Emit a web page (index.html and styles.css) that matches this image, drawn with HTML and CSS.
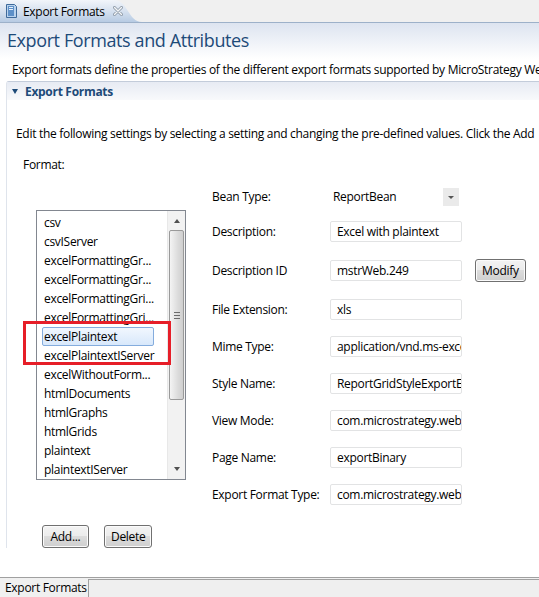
FILE: index.html
```html
<!DOCTYPE html>
<html lang="en">
<head>
    <meta charset="UTF-8">
    <title>Export Formats</title>
    <link rel="stylesheet" href="styles.css">
</head>
<body>
    <div class="tabbar">
        <div class="tab">
            <svg class="tab-icon" width="14" height="16" viewBox="0 0 14 16">
                <path d="M2.5 1.5 H10.5 L12.5 3.5 V14.5 H2.5 Z" fill="#b9d3ee" stroke="#3f6a9a"/>
                <path d="M4 3 H10 V13 H4 Z" fill="#5d90c8"/>
                <path d="M5 4.5 H9 M5 6.5 H9" stroke="#e8f1fb"/>
            </svg>
            <span class="tab-title">Export Formats</span>
            <svg class="tab-close" width="10" height="10" viewBox="0 0 10 10">
                <path d="M1.5 1.5 L8.5 8.5 M8.5 1.5 L1.5 8.5" stroke="#8c98a6" stroke-width="3" stroke-linecap="round"/>
                <path d="M1.5 1.5 L8.5 8.5 M8.5 1.5 L1.5 8.5" stroke="#f4f6f8" stroke-width="1.4" stroke-linecap="round"/>
            </svg>
        </div>
    </div>

    <div class="page">
        <div class="header">
            <h1>Export Formats and Attributes</h1>
        </div>
        <p class="intro">Export formats define the properties of the different export formats supported by MicroStrategy Web</p>

        <div class="section">
            <div class="section-head">
                <span class="twisty"></span>
                <span>Export Formats</span>
            </div>
            <p class="hint">Edit the following settings by selecting a setting and changing the pre-defined values. Click the Add</p>
            <p class="format-label">Format:</p>

            <div class="editor">
                <div class="left-col">
                    <div class="listbox">
                        <ul class="items">
                            <li>csv</li>
                            <li>csvIServer</li>
                            <li>excelFormattingGr...</li>
                            <li>excelFormattingGr...</li>
                            <li>excelFormattingGri...</li>
                            <li>excelFormattingGri...</li>
                            <li class="selected">excelPlaintext</li>
                            <li>excelPlaintextIServer</li>
                            <li>excelWithoutForm...</li>
                            <li>htmlDocuments</li>
                            <li>htmlGraphs</li>
                            <li>htmlGrids</li>
                            <li>plaintext</li>
                            <li>plaintextIServer</li>
                        </ul>
                        <div class="scrollbar">
                            <span class="arrow up"></span>
                            <div class="thumb"><span class="grip"></span></div>
                            <span class="arrow down"></span>
                        </div>
                        <div class="highlight"></div>
                    </div>
                    <div class="list-actions">
                        <button class="btn">Add...</button>
                        <button class="btn">Delete</button>
                    </div>
                </div>

                <div class="form">
                    <div class="row first">
                        <label>Bean Type:</label>
                        <div class="combo">
                            <span>ReportBean</span>
                            <span class="combo-btn"></span>
                        </div>
                    </div>
                    <div class="row gap14">
                        <label>Description:</label>
                        <div class="field">Excel with plaintext</div>
                    </div>
                    <div class="row gap18">
                        <label>Description ID</label>
                        <div class="field">mstrWeb.249</div>
                        <button class="btn modify">Modify</button>
                    </div>
                    <div class="row gap18">
                        <label>File Extension:</label>
                        <div class="field">xls</div>
                    </div>
                    <div class="row">
                        <label>Mime Type:</label>
                        <div class="field">application/vnd.ms-excel</div>
                    </div>
                    <div class="row">
                        <label>Style Name:</label>
                        <div class="field">ReportGridStyleExportExcel</div>
                    </div>
                    <div class="row">
                        <label>View Mode:</label>
                        <div class="field">com.microstrategy.web.objects</div>
                    </div>
                    <div class="row">
                        <label>Page Name:</label>
                        <div class="field">exportBinary</div>
                    </div>
                    <div class="row">
                        <label>Export Format Type:</label>
                        <div class="field">com.microstrategy.web.app</div>
                    </div>
                </div>
            </div>
        </div>
    </div>

    <div class="statusbar">
        <span class="status-label">Export Formats</span>
        <div class="status-box"></div>
    </div>
</body>
</html>
```

FILE: styles.css
```css
body {
    margin: 0;
    width: 539px;
    height: 597px;
    overflow: hidden;
    display: flex;
    flex-direction: column;
    font-family: "Open Sans", "Noto Sans", sans-serif;
    font-size: 12px;
    letter-spacing: -0.3px;
    color: #000;
    background: #fff;
}

/* editor tab strip */
.tabbar {
    height: 22px;
    background: #f0f0f0;
    border-bottom: 1px solid #9db1c9;
    flex-shrink: 0;
}
.tab {
    width: 142px;
    height: 22px;
    display: flex;
    align-items: center;
    background: linear-gradient(#f2f5fa, #d6e1ef 50%, #b7cbe3);
    clip-path: path('M0 0 H114 C128 0 128 22 142 22 H0 Z');
}
.tab-icon {
    margin: 0 5px 0 4px;
}
.tab-close {
    margin-left: 8px;
}

.page {
    flex: 1;
}
.header {
    height: 36px;
    background: linear-gradient(#dde4f0, #fff);
    padding-left: 7px;
}
h1 {
    margin: 0;
    padding-top: 5px;
    font-size: 18px;
    font-weight: normal;
    letter-spacing: -0.4px;
    color: #1d4a78;
    line-height: 24px;
}
.intro {
    margin: 2px 0 0 12px;
    line-height: 18px;
    white-space: nowrap;
}

/* collapsible section */
.section {
    margin: 2px 0 0 6px;
    border-top: 1px solid #c3ccda;
    border-left: 1px solid #dfe4ec;
    border-top-left-radius: 3px;
}
.section-head {
    height: 18px;
    display: flex;
    align-items: center;
    background: linear-gradient(#e7ebf3, #fff 140%);
    color: #1d4a78;
    font-weight: bold;
}
.twisty {
    width: 0;
    height: 0;
    margin: 0 7px 0 5px;
    border-left: 3.5px solid transparent;
    border-right: 3.5px solid transparent;
    border-top: 5px solid #1d4a78;
}
.hint {
    margin: 25px 0 0 9px;
    line-height: 18px;
    white-space: nowrap;
}
.format-label {
    margin: 13px 0 0 16px;
    line-height: 18px;
}

.editor {
    display: flex;
    margin-top: 12px;
}
.left-col {
    width: 176px;
    flex-shrink: 0;
}

/* format list */
.listbox {
    position: relative;
    margin: 24px 0 0 29px;
    width: 148px;
    height: 268px;
    border: 1px solid #828790;
    display: flex;
}
.items {
    list-style: none;
    margin: 0;
    padding: 2px 0 0 5px;
    flex: 1;
}
.items li {
    height: 19px;
    line-height: 19px;
    padding-left: 2px;
    white-space: nowrap;
    overflow: hidden;
}
.items li.selected {
    margin-right: 13px;
    border: 1px solid #84acdd;
    border-radius: 2px;
    background: linear-gradient(#f1f7fe, #d8e8fb);
    height: 17px;
    line-height: 17px;
    padding-left: 1px;
}
.scrollbar {
    width: 17px;
    background: #f2f2f2;
    border-left: 1px solid #e8e8e8;
    display: flex;
    flex-direction: column;
    align-items: center;
}
.arrow {
    width: 0;
    height: 0;
    margin: 8px 0;
    border-left: 3.5px solid transparent;
    border-right: 3.5px solid transparent;
}
.arrow.up {
    border-bottom: 4px solid #505050;
}
.arrow.down {
    border-top: 4px solid #505050;
    margin-top: auto;
}
.thumb {
    width: 13px;
    height: 168px;
    border: 1px solid #9a9a9a;
    border-radius: 2px;
    background: linear-gradient(90deg, #f4f4f4, #dcdcdc 60%, #cfcfcf);
    display: flex;
    align-items: center;
    justify-content: center;
    margin-top: -1px;
}
.grip {
    width: 6px;
    height: 5px;
    border-top: 1px solid #6b6b6b;
    border-bottom: 1px solid #6b6b6b;
    position: relative;
}
.grip::after {
    content: "";
    position: absolute;
    left: 0;
    right: 0;
    top: 2px;
    border-top: 1px solid #6b6b6b;
}
.highlight {
    position: absolute;
    left: -14px;
    top: 110px;
    width: 142px;
    height: 38px;
    border: 3px solid #e61e28;
    pointer-events: none;
}

.list-actions {
    display: flex;
    gap: 15px;
    margin: 45px 0 0 35px;
}

.btn {
    font-family: inherit;
    font-size: 12px;
    letter-spacing: -0.3px;
    height: 23px;
    padding: 0 6px;
    min-width: 47px;
    border: 1px solid #707070;
    border-radius: 3px;
    background: linear-gradient(#f3f3f3, #ebebeb 50%, #dcdcdc 50%, #cfcfcf);
    color: #000;
    box-shadow: inset 0 0 0 1px #fbfbfb;
}

/* attribute form */
.form {
    margin-left: 29px;
    display: flex;
    flex-direction: column;
}
.row {
    display: flex;
    align-items: center;
    height: 21px;
    margin-top: 16px;
}
.row.first {
    margin-top: 0;
}
.row.gap14 {
    margin-top: 14px;
}
.row.gap18 {
    margin-top: 18px;
}
.row label {
    width: 118px;
    flex-shrink: 0;
}
.combo {
    width: 126px;
    display: flex;
    align-items: center;
    padding-left: 3px;
}
.combo-btn {
    margin-left: auto;
    width: 16px;
    height: 18px;
    background: #eaeaea;
    position: relative;
}
.combo-btn::after {
    content: "";
    position: absolute;
    left: 5px;
    top: 8px;
    border-left: 3px solid transparent;
    border-right: 3px solid transparent;
    border-top: 3px solid #555;
}
.field {
    width: 124px;
    height: 19px;
    line-height: 19px;
    padding-left: 6px;
    border: 1px solid #e2e3e4;
    border-radius: 2px;
    white-space: nowrap;
    overflow: hidden;
}
.btn.modify {
    margin-left: 13px;
}

/* bottom status strip */
.statusbar {
    height: 19px;
    flex-shrink: 0;
    border-top: 1px solid #a0a0a0;
    background: #f0f0f0;
    display: flex;
    align-items: stretch;
}
.status-label {
    padding: 0 1px 0 5px;
    line-height: 19px;
}
.status-box {
    flex: 1;
    border-left: 1px solid #a0a0a0;
    border-top: 1px solid #a0a0a0;
    margin-top: 1px;
    background: #efefef;
}
```
